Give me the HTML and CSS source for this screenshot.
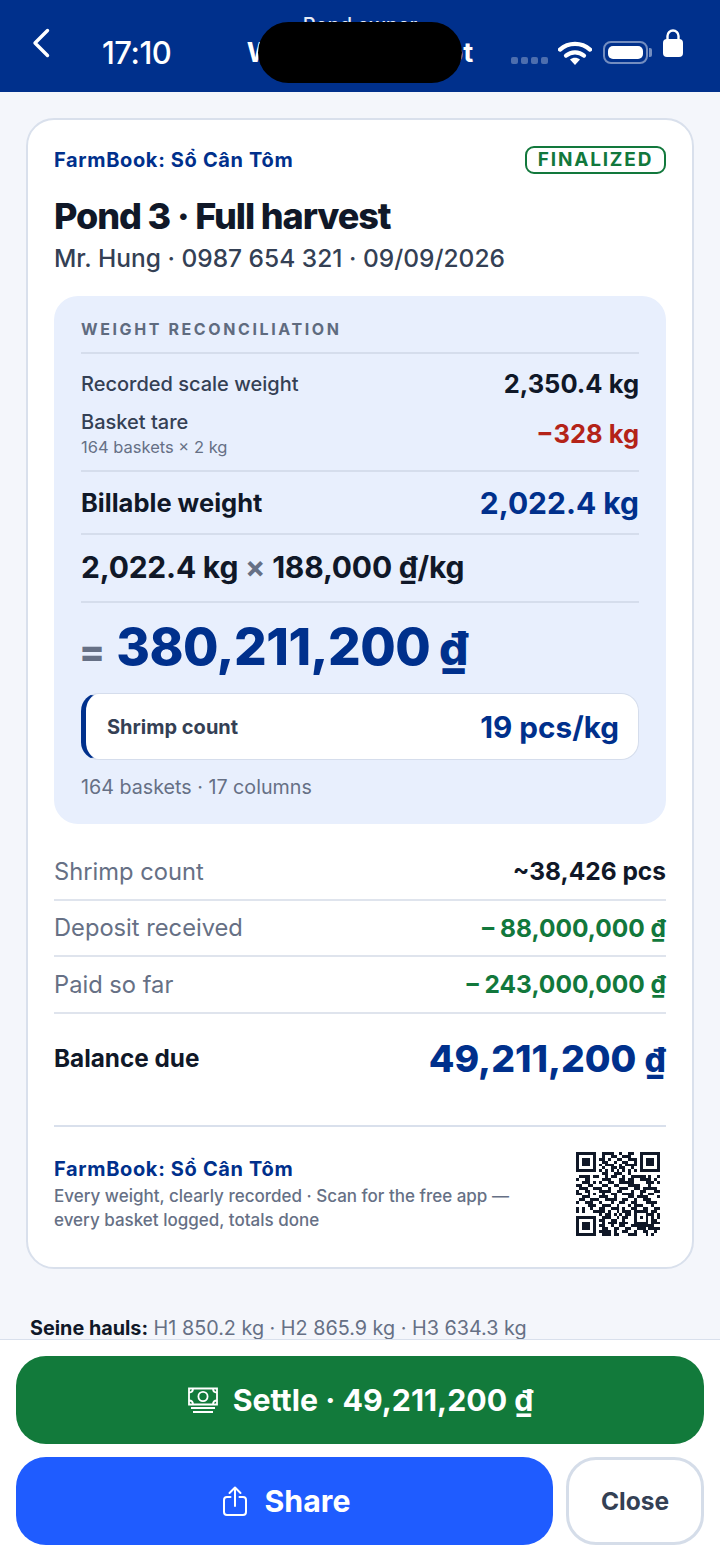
FILE: index.html
```html
<!DOCTYPE html>
<html lang="en">
<head>
  <meta charset="UTF-8">
  <title>Weighing receipt</title>
  <link rel="stylesheet" href="styles.css">
</head>
<body>
  <div class="app">
    <header class="topbar">
      <svg class="back" viewBox="0 0 18 30" width="18" height="30"><path d="M15.5 2.5 3 15l12.5 12.5" fill="none" stroke="#fff" stroke-width="3.4" stroke-linecap="round" stroke-linejoin="round"/></svg>
      <div class="topbar-sub">Pond owner</div>
      <div class="topbar-title">Weighing receipt</div>
      <!-- status bar sits on top of the header -->
      <div class="clock">17:10</div>
      <div class="notch"></div>
      <div class="signal"><i></i><i></i><i></i><i></i></div>
      <svg class="wifi" viewBox="0 0 34 24" width="34" height="24">
        <path d="M2 8.6C10.4 1 23.6 1 32 8.6" fill="none" stroke="#fff" stroke-width="4.2" stroke-linecap="round"/>
        <path d="M8 14.6c5.2-4.4 12.8-4.4 18 0" fill="none" stroke="#fff" stroke-width="4.2" stroke-linecap="round"/>
        <path d="M12 18.6c3-2.4 7-2.4 10 0L17 24z" fill="#fff"/>
      </svg>
      <div class="battery"><span></span></div>
      <svg class="lock" viewBox="0 0 22 30" width="22" height="30">
        <path d="M5.5 13V8a5.5 5.5 0 0 1 11 0v5" fill="none" stroke="#fff" stroke-width="2.4"/>
        <rect x="1" y="11" width="20" height="18" rx="4" fill="#fff"/>
      </svg>
    </header>

    <main class="scroll">
      <section class="card">
        <div class="card-head">
          <div class="brand">FarmBook: Sổ Cân Tôm</div>
          <div class="badge">FINALIZED</div>
        </div>
        <h1 class="title">Pond 3 · Full harvest</h1>
        <div class="meta">Mr. Hung · 0987 654 321 · 09/09/2026</div>

        <div class="panel">
          <div class="panel-label">WEIGHT RECONCILIATION</div>
          <div class="calc-rows">
            <div class="calc-row">
              <span class="calc-name">Recorded scale weight</span>
              <span class="calc-val">2,350.4 kg</span>
            </div>
            <div class="calc-row">
              <span>
                <span class="calc-name">Basket tare</span>
                <span class="calc-note">164 baskets × 2 kg</span>
              </span>
              <span class="calc-val red tare">−328 kg</span>
            </div>
          </div>
          <div class="billable">
            <span class="billable-name">Billable weight</span>
            <span class="billable-val">2,022.4 kg</span>
          </div>
          <div class="formula">2,022.4 kg <span class="op">×</span> 188,000 ₫/kg</div>
          <div class="total"><span class="eq">=</span> 380,211,200 <span class="cur">₫</span></div>
          <div class="count-box">
            <span class="count-name">Shrimp count</span>
            <span class="count-val">19 pcs/kg</span>
          </div>
          <div class="panel-foot">164 baskets · 17 columns</div>
        </div>

        <div class="sum-row">
          <span class="sum-name">Shrimp count</span>
          <span class="sum-val">~38,426 pcs</span>
        </div>
        <div class="sum-row">
          <span class="sum-name">Deposit received</span>
          <span class="sum-val green">– 88,000,000 ₫</span>
        </div>
        <div class="sum-row">
          <span class="sum-name">Paid so far</span>
          <span class="sum-val green">– 243,000,000 ₫</span>
        </div>
        <div class="balance">
          <span class="balance-name">Balance due</span>
          <span class="balance-val">49,211,200 <span class="cur">₫</span></span>
        </div>

        <div class="promo">
          <div class="promo-text">
            <div class="brand">FarmBook: Sổ Cân Tôm</div>
            <p>Every weight, clearly recorded · Scan for the free app — every basket logged, totals done</p>
          </div>
          <svg class="qr" viewBox="0 0 29 29" width="84" height="84" shape-rendering="crispEdges">
            <g fill="none" stroke="#101828">
              <rect x=".5" y=".5" width="6" height="6"/>
              <rect x="22.5" y=".5" width="6" height="6"/>
              <rect x=".5" y="22.5" width="6" height="6"/>
              <rect x="20.5" y="20.5" width="4" height="4"/>
              <path d="M9 .5h4M15 .5h1M18 .5h2M9 1.5h1M12 1.5h2M16 1.5h3M8 2.5h2M11 2.5h1M14 2.5h2M18 2.5h3M9 3.5h2M13 3.5h1M16 3.5h2M20 3.5h1M8 4.5h1M10 4.5h3M15 4.5h1M17 4.5h4M9 5.5h1M12 5.5h2M15 5.5h2M19 5.5h1M8 6.5h1M10 6.5h1M12 6.5h1M14 6.5h1M16 6.5h1M18 6.5h1M20 6.5h1M9 7.5h2M13 7.5h3M18 7.5h1"/>
              <path d="M1 8.5h4M6 8.5h2M10 8.5h1M12 8.5h2M16 8.5h1M19 8.5h5M25 8.5h1M28 8.5h1M0 9.5h1M3 9.5h2M9 9.5h3M15 9.5h2M18 9.5h2M22 9.5h4M27 9.5h1M2 10.5h3M6 10.5h1M8 10.5h1M11 10.5h2M15 10.5h5M24 10.5h3M28 10.5h1M0 11.5h2M4 11.5h2M9 11.5h2M13 11.5h2M18 11.5h4M25 11.5h1M1 12.5h3M6 12.5h3M11 12.5h1M15 12.5h3M20 12.5h2M23 12.5h5M0 13.5h1M3 13.5h2M8 13.5h4M14 13.5h2M19 13.5h1M22 13.5h2M27 13.5h2"/>
              <path d="M0 14.5h2M4 14.5h1M6 14.5h1M9 14.5h1M12 14.5h2M16 14.5h4M22 14.5h1M25 14.5h2M2 15.5h3M8 15.5h3M13 15.5h1M18 15.5h2M21 15.5h4M28 15.5h1M1 16.5h2M5 16.5h3M10 16.5h4M16 16.5h2M20 16.5h1M23 16.5h3M0 17.5h1M3 17.5h3M8 17.5h1M12 17.5h1M15 17.5h2M19 17.5h2M24 17.5h4M4 18.5h3M9 18.5h3M14 18.5h1M18 18.5h1M20 18.5h3M26 18.5h1M0 19.5h1M2 19.5h1M5 19.5h1M8 19.5h2M12 19.5h3M16 19.5h1M19 19.5h2M23 19.5h2M27 19.5h2M0 20.5h1M2 20.5h1M6 20.5h4M11 20.5h1M14 20.5h1M16 20.5h3M26 20.5h2"/>
              <path d="M8 21.5h1M10 21.5h2M13 21.5h1M15 21.5h1M17 21.5h2M25 21.5h2M28 21.5h1M9 22.5h3M14 22.5h1M16 22.5h2M26 22.5h1M28 22.5h1M8 23.5h2M12 23.5h2M16 23.5h1M26 23.5h2M9 24.5h1M11 24.5h3M15 24.5h3M26 24.5h3M8 25.5h2M12 25.5h1M15 25.5h2M19 25.5h8M9 26.5h2M13 26.5h2M17 26.5h2M21 26.5h3M25 26.5h4M8 27.5h4M13 27.5h1M16 27.5h2M20 27.5h1M23 27.5h2M27 27.5h1M9 28.5h3M13 28.5h2M18 28.5h3M24 28.5h1M26 28.5h1"/>
            </g>
            <g fill="#101828">
              <rect x="2" y="2" width="3" height="3"/>
              <rect x="24" y="2" width="3" height="3"/>
              <rect x="2" y="24" width="3" height="3"/>
              <rect x="22" y="22" width="1" height="1"/>
            </g>
          </svg>
        </div>
      </section>
      <div class="hauls"><b>Seine hauls:</b> H1 850.2 kg · H2 865.9 kg · H3 634.3 kg</div>
    </main>

    <footer class="actions">
      <button class="btn btn-settle">
        <svg viewBox="0 0 32 27" width="32" height="27" fill="none" stroke="#fff" stroke-width="1.8">
          <path d="M2 1.5h28v16H2z"/>
          <circle cx="16" cy="9.5" r="4.6"/>
          <path d="M2 5.5c2.4 0 4-1.6 4-4M30 5.5c-2.4 0-4-1.6-4-4M2 13.5c2.4 0 4 1.6 4 4M30 13.5c-2.4 0-4 1.6-4 4"/>
          <path d="M4 21h24M6 25h20"/>
        </svg>
        Settle · 49,211,200 ₫
      </button>
      <div class="btn-row">
        <button class="btn btn-share">
          <svg viewBox="0 0 24 30" width="24" height="30" fill="none" stroke="#fff" stroke-width="2" stroke-linecap="round" stroke-linejoin="round">
            <path d="M7.5 11H4a3 3 0 0 0-3 3v12a3 3 0 0 0 3 3h16a3 3 0 0 0 3-3V14a3 3 0 0 0-3-3h-3.5"/>
            <path d="M12 20V2M6.5 7 12 1.5 17.5 7"/>
          </svg>
          Share
        </button>
        <button class="btn btn-close">Close</button>
      </div>
    </footer>
  </div>
</body>
</html>
```

FILE: styles.css
```css
* {
  box-sizing: border-box;
}
body {
  margin: 0;
  font-family: 'Inter', 'Liberation Sans', sans-serif;
  background-color: #f4f6fb;
  color: #101828;
}
.app {
  height: 1564px;
  display: flex;
  flex-direction: column;
  overflow: hidden;
}

/* Header + status bar */
.topbar {
  position: relative;
  height: 92px;
  flex-shrink: 0;
  background: #00308c;
  color: #fff;
  text-align: center;
  overflow: hidden;
  padding-top: 15px;
}
.topbar-sub {
  font-size: 20px;
  line-height: 20px;
  font-weight: 500;
  opacity: 0.9;
}
.topbar-title {
  font-size: 27.3px;
  line-height: 36px;
  font-weight: 700;
}
.back {
  position: absolute;
  left: 32px;
  top: 28px;
}
.clock {
  position: absolute;
  left: 102px;
  top: 35px;
  font-size: 31px;
  line-height: 36px;
  font-weight: 500;
  letter-spacing: -0.5px;
}
.notch {
  position: absolute;
  left: 258px;
  top: 22px;
  width: 204px;
  height: 61px;
  border-radius: 31px;
  background: #000;
}
.signal {
  position: absolute;
  left: 511px;
  top: 57px;
  display: flex;
  gap: 3px;
}
.signal i {
  width: 7px;
  height: 7px;
  border-radius: 2px;
  background: rgba(255,255,255,0.3);
}
.wifi {
  position: absolute;
  left: 558px;
  top: 41px;
}
.battery {
  position: absolute;
  left: 603px;
  top: 41px;
  width: 45px;
  height: 23px;
  padding: 3px;
  border: 2px solid rgba(255,255,255,0.45);
  border-radius: 8px;
}
.battery::after {
  content: '';
  position: absolute;
  right: -6px;
  top: 5px;
  width: 3px;
  height: 9px;
  border-radius: 0 2px 2px 0;
  background: rgba(255,255,255,0.45);
}
.battery span {
  display: block;
  height: 100%;
  border-radius: 5px;
  background: #fff;
}
.lock {
  position: absolute;
  left: 662px;
  top: 28px;
}

/* Receipt */
.scroll {
  flex: 1;
  min-height: 0;
  overflow: hidden;
  padding: 26px 26px 0;
}
.card {
  height: 1151px;
  padding: 26px 26px 0;
  background: #fff;
  border: 2px solid #d9e0ec;
  border-radius: 28px;
}
.card-head {
  display: flex;
  justify-content: space-between;
  align-items: center;
  height: 28px;
}
.brand {
  font-size: 20px;
  line-height: 24px;
  font-weight: 700;
  letter-spacing: 0.65px;
  color: #00308c;
}
.badge {
  height: 28px;
  width: 141px;
  border: 2.5px solid #12783c;
  border-radius: 9px;
  color: #12783c;
  font-size: 19px;
  line-height: 23px;
  font-weight: 700;
  letter-spacing: 1.8px;
  text-align: center;
}
.title {
  margin: 20px 0 0;
  font-size: 36px;
  line-height: 44px;
  font-weight: 800;
  letter-spacing: -1.1px;
}
.meta {
  margin-top: 3px;
  font-size: 24.5px;
  line-height: 34px;
  font-weight: 500;
  color: #344054;
}

.panel {
  margin: 21px 0 20px;
  height: 528px;
  padding: 21px 27px 0;
  background: #e8effd;
  border-radius: 24px;
}
.panel-label {
  height: 37px;
  font-size: 16px;
  line-height: 24px;
  font-weight: 700;
  letter-spacing: 2.6px;
  color: #5f6b7f;
  border-bottom: 2px solid #d5ddec;
}
.calc-rows {
  height: 118px;
  padding-top: 15px;
  border-bottom: 2px solid #d5ddec;
}
.calc-row {
  display: flex;
  justify-content: space-between;
  align-items: center;
}
.calc-row + .calc-row {
  margin-top: 8px;
}
.calc-name {
  display: block;
  font-size: 20px;
  line-height: 30px;
  font-weight: 500;
  color: #344054;
}
.calc-note {
  display: block;
  font-size: 16.5px;
  line-height: 20px;
  color: #667085;
}
.calc-val {
  font-size: 25.5px;
  line-height: 30px;
  font-weight: 700;
}
.tare {
  padding-top: 4px;
}
.red {
  color: #b42318;
}
.billable {
  display: flex;
  justify-content: space-between;
  align-items: center;
  height: 63px;
  border-bottom: 2px solid #d5ddec;
}
.billable-name {
  font-size: 25.5px;
  font-weight: 700;
}
.billable-val {
  font-size: 30px;
  font-weight: 700;
  color: #00308c;
}
.formula {
  height: 68px;
  line-height: 64px;
  font-size: 30px;
  font-weight: 700;
  letter-spacing: -0.2px;
  border-bottom: 2px solid #d5ddec;
}
.op {
  color: #667085;
}
.total {
  height: 90px;
  line-height: 87px;
  font-size: 51.3px;
  font-weight: 800;
  color: #00308c;
  letter-spacing: -0.5px;
  white-space: nowrap;
}
.eq {
  margin: 0 1px 0 -2px;
  color: #667085;
  font-size: 38px;
}
.cur {
  font-size: 0.9em;
}
.total .cur {
  margin-left: -2px;
}
.count-box {
  display: flex;
  justify-content: space-between;
  align-items: center;
  height: 67px;
  padding: 0 19px 0 21px;
  background: #fff;
  border: 1px solid #d5ddec;
  border-left: 5px solid #00308c;
  border-radius: 18px;
}
.count-name {
  font-size: 20px;
  font-weight: 700;
  color: #344054;
}
.count-val {
  font-size: 29.7px;
  font-weight: 700;
  color: #00308c;
}
.panel-foot {
  margin-top: 12px;
  font-size: 19.7px;
  line-height: 30px;
  color: #667085;
}

.sum-row {
  display: flex;
  justify-content: space-between;
  align-items: center;
  height: 56.5px;
  border-bottom: 2px solid #dfe4ed;
}
.sum-name {
  font-size: 23.7px;
  color: #667085;
}
.sum-val {
  font-size: 24.5px;
  font-weight: 700;
}
.green {
  color: #12783c;
}
.balance {
  display: flex;
  justify-content: space-between;
  align-items: center;
  height: 90px;
  padding-bottom: 1px;
}
.balance-name {
  font-size: 24.3px;
  font-weight: 700;
}
.balance-val {
  font-size: 37.3px;
  font-weight: 800;
  color: #00308c;
}
.promo {
  display: flex;
  justify-content: space-between;
  margin-top: 21px;
  padding: 25px 6px 0 0;
  border-top: 2px solid #d9e0ec;
}
.promo-text {
  width: 480px;
  padding-top: 5px;
}
.promo-text p {
  margin: 3px 0 0;
  font-size: 17px;
  line-height: 24.5px;
  font-weight: 500;
  color: #667085;
}

.hauls {
  margin: 45px 0 0 4px;
  font-size: 19.8px;
  line-height: 28px;
  color: #667085;
  white-space: nowrap;
}
.hauls b {
  font-weight: 700;
  color: #101828;
}

/* Bottom actions */
.actions {
  flex-shrink: 0;
  height: 225px;
  padding: 16px 16px 0;
  background: #fff;
  border-top: 1px solid #d9e0ec;
}
.btn {
  display: flex;
  justify-content: center;
  align-items: center;
  height: 88px;
  border: 0;
  font-family: inherit;
  font-weight: 700;
  color: #fff;
}
.btn-settle {
  width: 100%;
  gap: 14px;
  background: #127a3b;
  border-radius: 30px;
  font-size: 30.3px;
}
.btn-row {
  display: flex;
  gap: 13px;
  margin-top: 13px;
}
.btn-share {
  flex: 1;
  gap: 18px;
  padding-left: 10px;
  background: #1f5cff;
  border-radius: 30px;
  font-size: 30.3px;
}
.btn-close {
  width: 138px;
  background: #fff;
  border: 3px solid #d5dde9;
  border-radius: 30px;
  color: #344054;
  font-size: 24.5px;
}
```
